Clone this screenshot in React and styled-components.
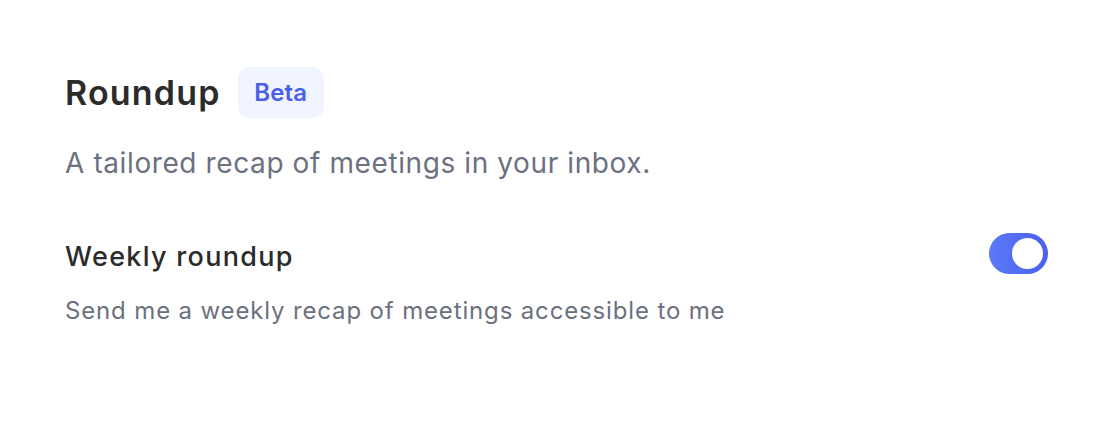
import React, { useState } from 'react'
import styled, { createGlobalStyle } from 'styled-components'

const GlobalStyle = createGlobalStyle`
  html, body {
    margin: 0;
    padding: 0;
    background: #ffffff;
  }
  body {
    font-family: Inter, "Noto Sans", Arial, sans-serif;
    -webkit-font-smoothing: antialiased;
  }
`

const Page = styled.div`
  width: 1112px;
  height: 448px;
  box-sizing: border-box;
  padding: 67px 64px 0 65px;
`

const Header = styled.div`
  display: flex;
  align-items: center;
  gap: 17px;
`

const Title = styled.h1`
  margin: 0;
  font-size: 34px;
  line-height: 40px;
  font-weight: 600;
  color: #2b2b2b;
  letter-spacing: 1.2px;
`

const Badge = styled.span`
  display: inline-flex;
  align-items: center;
  justify-content: center;
  width: 86px;
  height: 51px;
  border-radius: 12px;
  background: #eff4fe;
  color: #4a5fe9;
  font-size: 24px;
  font-weight: 600;
  letter-spacing: 0.2px;
`

const Subtitle = styled.p`
  margin: 28px 0 0;
  font-size: 28px;
  line-height: 34px;
  color: #6b7180;
  letter-spacing: 0.6px;
`

const SettingRow = styled.div`
  display: flex;
  justify-content: space-between;
  align-items: flex-start;
  margin-top: 61px;
`

const SettingText = styled.div`
  display: flex;
  flex-direction: column;
  gap: 24px;
`

const SettingTitle = styled.div`
  font-size: 27px;
  line-height: 32px;
  font-weight: 500;
  color: #2b2b2b;
  letter-spacing: 1.3px;
`

const SettingDesc = styled.div`
  font-size: 24px;
  line-height: 28px;
  color: #6b7180;
  letter-spacing: 0.85px;
`

const Toggle = styled.button`
  position: relative;
  width: 59px;
  height: 41px;
  margin-top: -8px;
  padding: 0;
  border: none;
  border-radius: 21px;
  cursor: pointer;
  background: ${({ $on }) => ($on ? 'linear-gradient(90deg, #5c79f8, #4860ee)' : '#d7dbe3')};
  transition: background 0.2s ease;
`

const Knob = styled.span`
  position: absolute;
  top: 5px;
  left: ${({ $on }) => ($on ? '23px' : '5px')};
  width: 31px;
  height: 31px;
  border-radius: 50%;
  background: #ffffff;
  transition: left 0.2s ease;
`

export default function App() {
  const [weekly, setWeekly] = useState(true)

  return (
    <>
      <GlobalStyle />
      <Page>
        <Header>
          <Title>Roundup</Title>
          <Badge>Beta</Badge>
        </Header>
        <Subtitle>A tailored recap of meetings in your inbox.</Subtitle>

        <SettingRow>
          <SettingText>
            <SettingTitle>Weekly roundup</SettingTitle>
            <SettingDesc>Send me a weekly recap of meetings accessible to me</SettingDesc>
          </SettingText>
          <Toggle $on={weekly} onClick={() => setWeekly(!weekly)} aria-label="Weekly roundup">
            <Knob $on={weekly} />
          </Toggle>
        </SettingRow>
      </Page>
    </>
  )
}
